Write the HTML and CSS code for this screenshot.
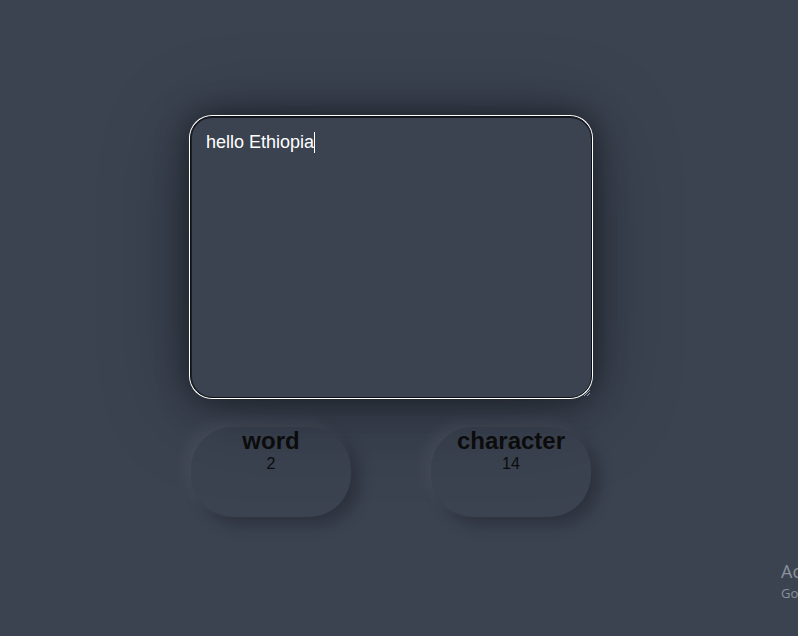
FILE: index.html
```html
<!DOCTYPE html>
<html>
<head>
<meta charset="utf-8">
<link rel="stylesheet" href="styles.css">
</head>
<body>
<main class="app">
  <div class="editor">
    <div class="editor-text">hello Ethiopia<span class="caret"></span></div>
    <svg class="grip" width="8" height="8" viewBox="0 0 8 8"><path d="M7 1L1 7M7 4L4 7" stroke="#9aa0aa" stroke-width="1"/></svg>
  </div>
  <div class="stats">
    <div class="stat"><div class="stat-label">word</div><div class="stat-value">2</div></div>
    <div class="stat"><div class="stat-label">character</div><div class="stat-value">14</div></div>
  </div>
</main>
<div class="activate">
  <div class="act-title">Activate Windows</div>
  <div class="act-sub">Go to Settings to activate Windows.</div>
</div>
</body>
</html>
```
FILE: styles.css
```css
html, body {
  margin: 0;
  height: 100%;
  overflow: hidden;
}
body {
  background: #3b4351;
  font-family: "Liberation Sans", Arial, sans-serif;
  position: relative;
}
.app {
  padding-top: 116px;
  padding-left: 190px;
  display: flex;
  flex-direction: column;
  width: 402px;
}
.editor {
  position: relative;
  box-sizing: border-box;
  width: 402px;
  height: 282px;
  border: 1px solid #0e1015;
  border-radius: 22px;
  background: #3b4351;
  box-shadow: inset 0 1px 0 #151820, inset 1px 0 0 #1c2029, 0 0 0 1px #fff, 0 0 30px rgba(0,0,0,0.5), 0 10px 90px rgba(0,0,0,0.32);
  padding: 14px 15px;
}
.editor-text {
  color: #fff;
  font-size: 18px;
  line-height: 22px;
}
.caret {
  display: inline-block;
  width: 1px;
  height: 21px;
  background: #fff;
  vertical-align: -5px;
}
.grip {
  position: absolute;
  right: 0;
  bottom: 0;
}
.stats {
  display: flex;
  gap: 80px;
  margin-top: 29px;
  padding-left: 1px;
}
.stat {
  width: 160px;
  height: 90px;
  border-radius: 42px;
  background: #3b4351;
  box-shadow: -6px -6px 14px rgba(255,255,255,0.06), 8px 8px 16px rgba(0,0,0,0.25);
  text-align: center;
  color: #0d0d0d;
}
.stat-label {
  font-size: 24px;
  font-weight: bold;
  line-height: 26px;
  padding-top: 1px;
}
.stat-value {
  font-size: 16px;
  line-height: 18px;
  padding-top: 1px;
}
.activate {
  position: absolute;
  left: 781px;
  top: 560px;
  color: #8b919b;
  font-family: "Open Sans", "Noto Sans", sans-serif;
  white-space: nowrap;
}
.act-title {
  font-size: 18px;
  line-height: 22px;
}
.act-sub {
  font-size: 13px;
  line-height: 22px;
}
```
